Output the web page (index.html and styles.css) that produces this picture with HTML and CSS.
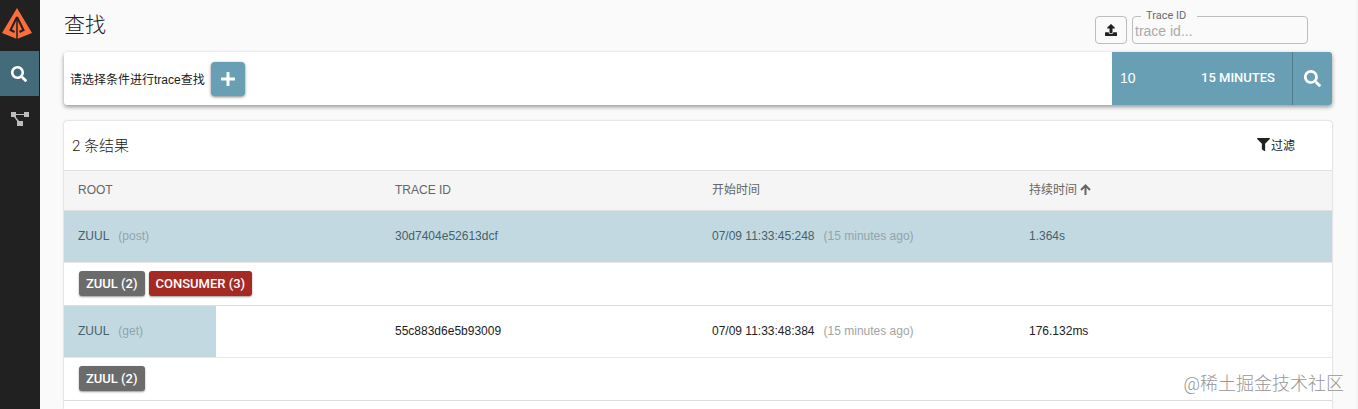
FILE: index.html
```html
<!DOCTYPE html>
<html lang="zh-CN">
<head>
    <meta charset="UTF-8">
    <title>查找</title>
    <link rel="stylesheet" href="styles.css">
</head>
<body>
    <nav class="sidebar">
        <a class="logo" href="#" aria-label="Home">
            <svg width="32" height="34" viewBox="0 0 32 34">
                <path fill="#fb6d3a" d="M16 1L31 26L16 32L1 26z"/>
                <path fill="none" stroke="#212121" stroke-width="2" d="M16 10L9.500 23l4 2M16 10L22.500 23l-4 2"/>
                <path fill="none" stroke="#212121" stroke-width="1.500" d="M16 10v22"/>
            </svg>
        </a>
        <a class="nav-item active" href="#" aria-label="Search">
            <svg width="16" height="16" viewBox="0 0 512 512"><path fill="currentColor" d="M505 442.700L405.300 343c-4.500-4.500-10.600-7-17-7H372c27.600-35.300 44-79.700 44-128C416 93.100 322.900 0 208 0S0 93.100 0 208s93.100 208 208 208c48.300 0 92.700-16.400 128-44v16.300c0 6.400 2.500 12.500 7 17l99.700 99.700c9.400 9.400 24.600 9.400 33.900 0l28.300-28.300c9.400-9.400 9.400-24.600.1-34zM208 336c-70.700 0-128-57.200-128-128 0-70.700 57.200-128 128-128 70.700 0 128 57.200 128 128 0 70.700-57.200 128-128 128z"/></svg>
        </a>
        <a class="nav-item" href="#" aria-label="Dependencies">
            <svg width="18" height="14" viewBox="0 0 18 14"><path fill="currentColor" d="M0 0h5v5H0zM13 0h5v5h-5zM6 9h6v5H6zM5 2h8v1H5zM3 5l1-1 4 5H6z"/></svg>
        </a>
    </nav>
    <main class="main">
        <header class="header">
            <h1 class="title">查找</h1>
            <div class="lookup">
                <button class="upload" type="button" aria-label="Upload">
                    <svg width="12" height="12" viewBox="0 0 512 512"><path fill="currentColor" d="M296 384h-80c-13.300 0-24-10.700-24-24V192h-87.700c-17.800 0-26.700-21.500-14.100-34.100L242.300 5.700c7.500-7.500 19.800-7.500 27.300 0l152.200 152.200c12.600 12.600 3.700 34.100-14.100 34.100H320v168c0 13.300-10.700 24-24 24zm216-8v112c0 13.300-10.700 24-24 24H24c-13.300 0-24-10.700-24-24V376c0-13.300 10.700-24 24-24h136v8c0 30.900 25.100 56 56 56h80c30.900 0 56-25.100 56-56v-8h136c13.300 0 24 10.700 24 24z"/></svg>
                </button>
                <fieldset class="trace-field">
                    <legend><label for="traceId">Trace ID</label></legend>
                    <input type="text" id="traceId" placeholder="trace id...">
                </fieldset>
            </div>
        </header>

        <form class="search-bar">
            <div class="conditions">
                <span>请选择条件进行trace查找</span>
                <button class="add" type="button" aria-label="Add condition">
                    <svg width="14" height="14" viewBox="0 0 14 14"><path stroke="currentColor" stroke-width="3" stroke-linecap="round" d="M7 1v12M1 7h12"/></svg>
                </button>
            </div>
            <input class="limit" type="text" value="10" aria-label="Limit">
            <button class="lookback" type="button">15 MINUTES</button>
            <button class="run" type="button" aria-label="Run query">
                <svg width="17" height="17" viewBox="0 0 512 512"><path fill="currentColor" d="M505 442.700L405.300 343c-4.500-4.500-10.600-7-17-7H372c27.600-35.300 44-79.700 44-128C416 93.100 322.900 0 208 0S0 93.100 0 208s93.100 208 208 208c48.300 0 92.700-16.400 128-44v16.300c0 6.400 2.500 12.500 7 17l99.700 99.700c9.400 9.400 24.600 9.400 33.900 0l28.300-28.300c9.400-9.400 9.400-24.600.1-34zM208 336c-70.700 0-128-57.200-128-128 0-70.700 57.200-128 128-128 70.700 0 128 57.200 128 128 0 70.700-57.200 128-128 128z"/></svg>
            </button>
        </form>

        <section class="results">
            <div class="results-head">
                <h2 class="count">2 条结果</h2>
                <button class="filter" type="button">
                    <svg width="13" height="13" viewBox="0 0 512 512"><path fill="currentColor" d="M488 0H24C2.700 0-8 25.900 7.100 41L192 225.900V432c0 7.800 3.800 15.200 10.200 19.700l80 56C298 518.700 320 507.500 320 488V225.900L504.900 41C520 25.900 509.300 0 488 0z"/></svg>
                    过滤
                </button>
            </div>
            <table class="traces">
                <thead>
                    <tr>
                        <th>ROOT</th>
                        <th>TRACE ID</th>
                        <th>开始时间</th>
                        <th>持续时间 <svg class="sort" width="11" height="11" viewBox="0 0 11 11"><path fill="none" stroke="currentColor" stroke-width="2" d="M1 6l4.500-4.500L10 6M5.500 2v9"/></svg></th>
                    </tr>
                </thead>
                <tbody>
                    <tr class="trace slow" style="background-size: 100% 100%">
                        <td><span class="root">ZUUL</span><span class="muted">(post)</span></td>
                        <td>30d7404e52613dcf</td>
                        <td>07/09 11:33:45:248<span class="muted">(15 minutes ago)</span></td>
                        <td>1.364s</td>
                    </tr>
                    <tr class="services">
                        <td colspan="4"><div class="badges"><span class="badge">ZUUL (2)</span><span class="badge error">CONSUMER (3)</span></div></td>
                    </tr>
                    <tr class="trace" style="background-size: 12% 100%">
                        <td><span class="root">ZUUL</span><span class="muted">(get)</span></td>
                        <td>55c883d6e5b93009</td>
                        <td>07/09 11:33:48:384<span class="muted">(15 minutes ago)</span></td>
                        <td>176.132ms</td>
                    </tr>
                    <tr class="services">
                        <td colspan="4"><div class="badges"><span class="badge">ZUUL (2)</span></div></td>
                    </tr>
                </tbody>
            </table>
        </section>
    </main>
    <div class="watermark">@稀土掘金技术社区</div>
</body>
</html>
```
FILE: styles.css
```css
* {
    box-sizing: border-box;
}
body {
    display: flex;
    height: 100vh;
    margin: 0;
    overflow: hidden;
    background-color: #fafafa;
    color: #212121;
    font-family: "Liberation Sans", "Noto Sans CJK SC", sans-serif;
    font-size: 12px;
}
button,
input {
    font-family: inherit;
    font-size: inherit;
    margin: 0;
    padding: 0;
    border: none;
}
button {
    display: flex;
    align-items: center;
    justify-content: center;
    cursor: pointer;
}
.sidebar {
    flex: none;
    width: 40px;
    background-color: #212121;
}
.logo {
    display: flex;
    justify-content: center;
    height: 51px;
    padding: 7px 6px 0 0;
}
.nav-item {
    display: flex;
    align-items: center;
    justify-content: center;
    height: 45px;
    color: #bdbdbd;
}
.nav-item.active {
    margin-right: 1px;
    padding-right: 2px;
    background-color: #436b7a;
    color: #fff;
}
.main {
    flex: 1;
    display: flex;
    flex-direction: column;
    padding: 0 24px;
    border-right: 2px solid #f4f4f4;
}
.header {
    display: flex;
    justify-content: space-between;
    height: 52px;
    padding-right: 24px;
}
.title {
    margin: 0;
    font-size: 21px;
    font-weight: 300;
    line-height: 50px;
}
.lookup {
    display: flex;
    align-items: flex-end;
    gap: 5px;
    padding-bottom: 8px;
}
.upload {
    width: 32px;
    height: 28px;
    border: 1px solid #bdbdbd;
    border-radius: 4px;
    background-color: transparent;
    color: #212121;
}
.trace-field {
    width: 176px;
    height: 34px;
    margin: 0;
    padding: 0 2px;
    border: 1px solid #bdbdbd;
    border-radius: 4px;
}
.trace-field legend {
    margin-left: 6px;
    padding: 0 11px 0 5px;
    color: #6b6b6b;
    font-family: Roboto, sans-serif;
    font-size: 11px;
    line-height: 12px;
}
.trace-field input {
    display: block;
    width: 100%;
    height: 17px;
    background: transparent;
    font-size: 14px;
}
.trace-field input::placeholder {
    color: #aaa;
}
.search-bar {
    display: flex;
    flex: none;
    height: 53px;
    border-radius: 3px;
    background-color: #fff;
    box-shadow: 0 2px 4px rgba(0, 0, 0, 0.4);
}
.conditions {
    flex: 1;
    display: flex;
    align-items: center;
    gap: 6px;
    padding-left: 6px;
}
.add {
    width: 34px;
    height: 34px;
    border-radius: 4px;
    background-color: #699fb4;
    color: #fff;
    box-shadow: 0 1px 3px rgba(0, 0, 0, 0.5);
}
.limit,
.lookback,
.run {
    background-color: #699fb4;
    color: #fff;
}
.limit {
    width: 72px;
    padding: 0 0 2px 8px;
    font-size: 14px;
}
.lookback {
    width: 108px;
    padding-bottom: 2px;
    font-family: Roboto, sans-serif;
    font-size: 13px;
    font-weight: 500;
}
.run {
    width: 40px;
    border-left: 1px solid #507b8b;
    border-radius: 0 3px 3px 0;
}
.results {
    flex: 1 0 auto;
    margin-top: 16px;
    border-radius: 3px 3px 0 0;
    background-color: #fff;
    box-shadow: 0 0 2px rgba(0, 0, 0, 0.3);
}
.results-head {
    display: flex;
    align-items: center;
    justify-content: space-between;
    height: 49px;
    padding: 0 37px 2px 8px;
}
.count {
    margin: 0;
    font-family: Roboto, "Noto Sans CJK SC", sans-serif;
    font-size: 15px;
    font-weight: 300;
}
.filter {
    gap: 1px;
    background: none;
    color: #212121;
}
.traces {
    width: 100%;
    border-collapse: collapse;
    table-layout: fixed;
}
.traces th,
.traces td {
    padding: 0 14px 1px;
    text-align: left;
    font-weight: 400;
}
.traces th {
    height: 40px;
    border-top: 1px solid #e0e0e0;
    border-bottom: 1px solid #e0e0e0;
    background-color: #f5f5f5;
    color: #666;
    line-height: 16px;
}
.sort {
    vertical-align: -1px;
}
.trace {
    height: 52px;
    background-image: linear-gradient(#c3d9e1, #c3d9e1);
    background-repeat: no-repeat;
}
.trace.slow,
.root {
    color: #45616b;
}
.muted {
    margin-left: 9px;
    color: #a3a3a3;
}
.slow .muted,
.root + .muted {
    color: #8ea5ad;
}
.traces .services td {
    height: 43px;
    padding: 0 15px 1px;
    border-top: 1px solid #e8e8e8;
    border-bottom: 1px solid #ddd;
}
.badges {
    display: flex;
    gap: 4px;
}
.badge {
    padding: 0 7px;
    border-radius: 3px;
    background-color: #6b6b6b;
    color: #fff;
    font-family: Roboto, sans-serif;
    font-size: 13px;
    font-weight: 500;
    line-height: 25px;
    box-shadow: 0 1px 2px rgba(0, 0, 0, 0.4);
}
.badge.error {
    background-color: #a62a24;
}
.watermark {
    position: absolute;
    right: 14px;
    bottom: 12px;
    color: #969696;
    font-family: Roboto, "Noto Sans CJK SC", sans-serif;
    font-size: 18px;
    font-weight: 300;
    line-height: 26px;
    text-shadow: 0 0 2px #fff;
}
```
